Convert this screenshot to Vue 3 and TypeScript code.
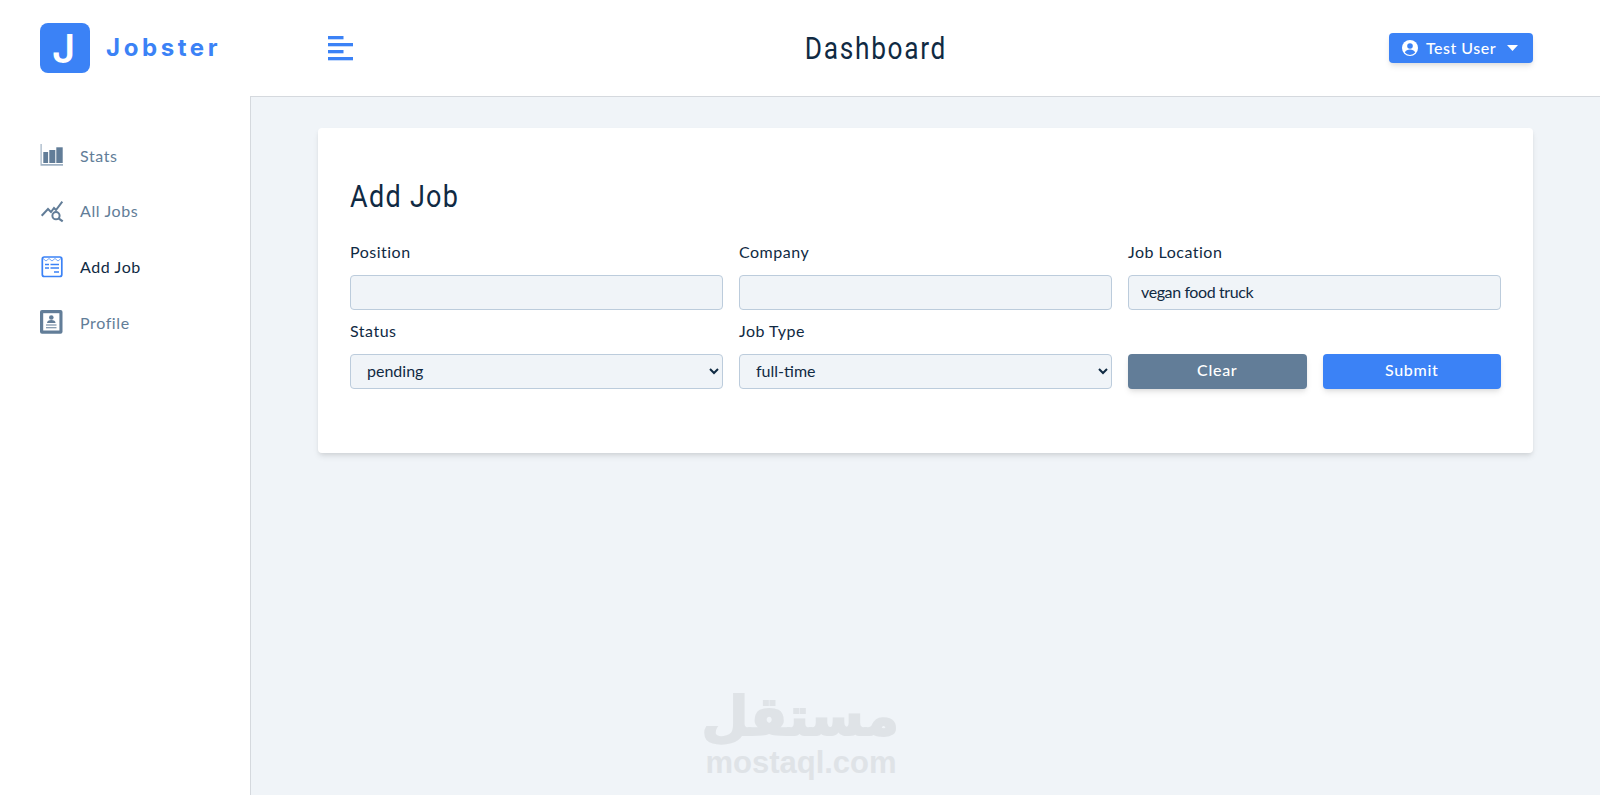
<script setup lang="ts">
const fieldsTop = [
  { label: 'Position', value: '' },
  { label: 'Company', value: '' },
  { label: 'Job Location', value: 'vegan food truck' },
]
</script>

<template>
  <div class="page">
    <aside class="sidebar">
      <div class="brand">
        <div class="logo">J</div>
        <span class="brand-name">Jobster</span>
      </div>
      <nav class="nav">
        <a class="nav-link">
          <svg class="nav-icon" viewBox="0 0 24 24" fill="#627d98">
            <path d="M0.500 1h1.200v20h21.300v1.800H0.500z" fill="#9fb1c3" />
            <rect x="3.300" y="9" width="4.800" height="11" />
            <rect x="9.300" y="7" width="6" height="13" />
            <rect x="16.300" y="4.300" width="6.400" height="15.700" />
          </svg>
          <span>Stats</span>
        </a>
        <a class="nav-link">
          <svg class="nav-icon" viewBox="0 0 24 24" fill="none" stroke="#627d98" stroke-width="2">
            <path d="M1.700 16.700L8 10l3 3 3-4 2 2 6.300-8.300" />
            <circle cx="16" cy="16.700" r="3.600" fill="#fff" />
            <path d="M18.600 19.300l4.100 3" stroke-width="2.200" />
          </svg>
          <span>All Jobs</span>
        </a>
        <a class="nav-link active">
          <svg class="nav-icon" viewBox="0 0 24 24" fill="none" stroke="#3b82f6">
            <rect x="2.300" y="2" width="19.500" height="19.500" rx="2" stroke-width="1.700" />
            <path d="M3 3.500l3 2.500 3-2.500 3 2.500 3-2.500 3 2.500 3-2.500" stroke-width="1" opacity="0.700" />
            <path d="M5 9.500h4M10.500 9.500h8.500M5 13h4M10.500 13h8.500M14 17h5" stroke-width="1.600" />
          </svg>
          <span>Add Job</span>
        </a>
        <a class="nav-link">
          <svg class="nav-icon" viewBox="0 0 24 24">
            <rect x="0" y="0" width="22.500" height="23.700" rx="2" fill="#627d98" />
            <rect x="3.200" y="3.200" width="16.200" height="17.300" fill="#fff" />
            <circle cx="11.300" cy="7.500" r="2.300" fill="#627d98" />
            <path d="M7 13c0-2 1.800-3 4.300-3s4.300 1 4.300 3z" fill="#627d98" />
            <path d="M6 15h10.500M6 17.800h10.500" stroke="#627d98" stroke-width="1.100" />
          </svg>
          <span>Profile</span>
        </a>
      </nav>
    </aside>

    <div class="main">
      <header class="topbar">
        <button class="toggle" aria-label="Toggle sidebar">
          <svg width="25" height="25" viewBox="0 0 25 25" fill="#3b82f6">
            <rect x="0" y="0" width="15.500" height="3.300" />
            <rect x="0" y="7" width="25" height="3.300" />
            <rect x="0" y="14" width="15.500" height="3.300" />
            <rect x="0" y="21" width="25" height="3.300" />
          </svg>
        </button>
        <h1 class="title">Dashboard</h1>
        <button class="user-btn">
          <svg width="16" height="16" viewBox="0 0 16 16">
            <circle cx="8" cy="8" r="8" fill="#fff" />
            <circle cx="8" cy="6" r="2.800" fill="#3b82f6" />
            <path d="M2.800 12.500c1-2.200 3-3 5.200-3s4.200.8 5.200 3a6.800 6.800 0 0 1-10.400 0z" fill="#3b82f6" />
          </svg>
          <span class="user-name">Test User</span>
          <svg class="caret" width="11" height="6" viewBox="0 0 11 6" fill="#fff">
            <path d="M0 0h11L5.500 6z" />
          </svg>
        </button>
      </header>

      <main class="content">
        <section class="card">
          <h2 class="card-title">Add Job</h2>
          <form class="form" @submit.prevent>
            <div v-for="f in fieldsTop" :key="f.label" class="field">
              <label class="label">{{ f.label }}</label>
              <input class="control text-input" type="text" :value="f.value" />
            </div>
            <div class="field">
              <label class="label">Status</label>
              <select class="control select">
                <option>pending</option>
              </select>
            </div>
            <div class="field">
              <label class="label">Job Type</label>
              <select class="control select">
                <option>full-time</option>
              </select>
            </div>
            <div class="actions">
              <button type="button" class="btn btn-clear">Clear</button>
              <button type="submit" class="btn btn-submit">Submit</button>
            </div>
          </form>
        </section>
        <div class="watermark">
          <div class="wm-ar" lang="ar" dir="rtl">مستقل</div>
          <div class="wm-en">mostaql.com</div>
        </div>
      </main>
    </div>
  </div>
</template>

<style>
html, body {
  margin: 0;
  background: #f0f4f8;
}
</style>

<style scoped>
.page {
  display: flex;
  height: 795px;
  overflow: hidden;
  font-family: Lato, "Open Sans", sans-serif;
  color: #102a43;
}
.sidebar {
  width: 251px;
  flex: none;
  box-sizing: border-box;
  background: #fff;
  border-right: 1px solid #d5d9de;
}
.brand {
  height: 97px;
  box-sizing: border-box;
  padding: 23px 0 0 40px;
  display: flex;
  align-items: flex-start;
  gap: 16px;
}
.logo {
  width: 50px;
  height: 50px;
  border-radius: 8px;
  background: #3b82f6;
  color: #fff;
  display: flex;
  align-items: center;
  justify-content: center;
  font-family: Inter, sans-serif;
  font-weight: 600;
  font-size: 40px;
  padding-right: 3px;
  box-sizing: border-box;
}
.brand-name {
  font-family: Inter, sans-serif;
  font-weight: 700;
  font-size: 24px;
  line-height: 50px;
  letter-spacing: 3.600px;
  color: #3b82f6;
}
.nav {
  display: flex;
  flex-direction: column;
  padding-top: 30.200px;
}
.nav-link {
  display: flex;
  align-items: center;
  gap: 16px;
  height: 55.800px;
  padding-left: 40px;
  font-size: 16px;
  letter-spacing: 0.600px;
  color: #627d98;
}
.nav-link.active {
  color: #102a43;
}
.nav-icon {
  width: 24px;
  height: 24px;
  flex: none;
}
.main {
  flex: 1;
  min-width: 0;
  display: flex;
  flex-direction: column;
}
.topbar {
  height: 97px;
  box-sizing: border-box;
  background: #fff;
  border-bottom: 1px solid #d5d9de;
  margin-left: -1px;
  padding: 0 67px 0 78px;
  display: flex;
  align-items: center;
  justify-content: space-between;
}
.toggle {
  border: 0;
  padding: 0;
  background: none;
  display: flex;
}
.title {
  margin: 0 0 0 10px;
  font-family: Roboto, sans-serif;
  font-weight: 400;
  font-size: 31px;
  letter-spacing: 2px;
  color: #102a43;
  transform: scaleX(0.847);
}
.user-btn {
  width: 144px;
  height: 30px;
  padding: 0 0 0 13px;
  border: 0;
  border-radius: 4px;
  background: #3b82f6;
  color: #fff;
  font: 500 16px Lato, sans-serif;
  letter-spacing: 0.500px;
  display: flex;
  align-items: center;
  gap: 8px;
  box-shadow: 0 4px 6px -1px rgba(0, 0, 0, 0.1), 0 2px 4px -1px rgba(0, 0, 0, 0.06);
}
.user-name {
  margin-bottom: 2px;
}
.caret {
  margin-left: 3px;
}
.content {
  position: relative;
  flex: 1;
  background: #f0f4f8;
  padding: 31px 67px 0 67px;
}
.card {
  background: #fff;
  border-radius: 4px;
  box-shadow: 0 4px 6px -1px rgba(0, 0, 0, 0.1), 0 2px 4px -1px rgba(0, 0, 0, 0.06);
  padding: 49px 32px 64px;
  height: 325px;
  box-sizing: border-box;
}
.card-title {
  margin: 0 0 23px;
  font-family: Roboto, sans-serif;
  font-weight: 400;
  font-size: 31px;
  line-height: 40px;
  letter-spacing: 1.500px;
  color: #102a43;
  transform: scaleX(0.87);
  transform-origin: left center;
}
.form {
  display: grid;
  grid-template-columns: repeat(3, 1fr);
  column-gap: 16px;
  row-gap: 9px;
}
.field {
  display: flex;
  flex-direction: column;
}
.label {
  font-size: 16px;
  line-height: 24px;
  letter-spacing: 0.500px;
  margin-bottom: 11px;
  color: #102a43;
}
.control {
  box-sizing: border-box;
  width: 100%;
  height: 35px;
  padding: 4px 12px 6px;
  border: 1px solid #bcccdc;
  border-radius: 4px;
  background: #f0f4f8;
  color: #102a43;
  font: 16px Lato, sans-serif;
}
.text-input {
  letter-spacing: -0.400px;
}
.actions {
  display: grid;
  grid-template-columns: 1fr 1fr;
  gap: 16px;
  align-self: end;
}
.btn {
  height: 35px;
  padding: 0 0 4px;
  border: 0;
  border-radius: 4px;
  color: #fff;
  font: 500 16px Lato, sans-serif;
  letter-spacing: 0.700px;
  box-shadow: 0 4px 6px -1px rgba(0, 0, 0, 0.1), 0 2px 4px -1px rgba(0, 0, 0, 0.06);
}
.btn-clear {
  background: #627d98;
}
.btn-submit {
  background: #3b82f6;
}
.watermark {
  position: absolute;
  left: 452px;
  top: 590px;
  width: 196px;
  text-align: center;
  color: #dfe3e7;
  font-weight: 700;
  pointer-events: none;
}
.wm-ar {
  font-family: "DejaVu Sans", sans-serif;
  font-size: 54px;
  line-height: 60px;
  -webkit-text-stroke: 2px #dfe3e7;
}
.wm-en {
  font-family: "Liberation Sans", sans-serif;
  font-size: 31px;
  line-height: 32px;
}
</style>
